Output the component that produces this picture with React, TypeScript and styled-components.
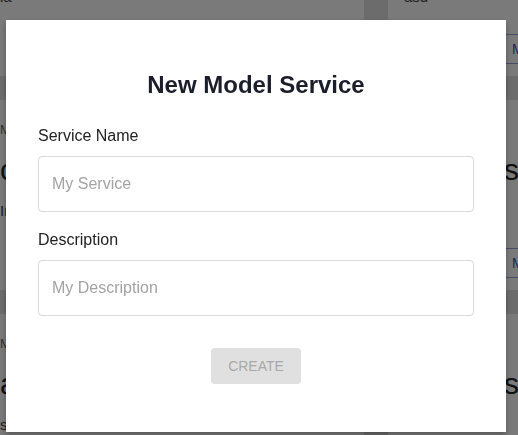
import React from "react";
import styled, { createGlobalStyle } from "styled-components";

const GlobalStyle = createGlobalStyle`
  html, body {
    margin: 0;
    padding: 0;
    overflow: hidden;
    background: #e2e2e2;
    font-family: "Liberation Sans", Arial, Helvetica, sans-serif;
  }
  * { box-sizing: border-box; }
`;

/* ---------- background page (dimmed) ---------- */

const Page = styled.div`
  width: 100vw;
  height: 100vh;
  overflow: hidden;
`;

const CardGrid = styled.div`
  display: grid;
  grid-template-columns: 380px 380px;
  column-gap: 24px;
  row-gap: 24px;
  align-items: start;
  /* page is scrolled: first row starts above the viewport */
  margin: -114px 0 0 -16px;
`;

const Card = styled.div`
  background: #ffffff;
  height: 190px;
  padding: 22px 16px 12px;
  display: flex;
  flex-direction: column;
`;

const CardLabel = styled.div`
  font-size: 13px;
  line-height: 16px;
  color: #6b6b6b;
`;

const CardTitle = styled.div`
  margin-top: 14px;
  font-size: 30px;
  line-height: 36px;
  color: #222222;
  white-space: nowrap;
`;

const CardDesc = styled.div`
  margin-top: 13px;
  font-size: 15px;
  line-height: 20px;
  color: #444444;
  white-space: nowrap;
`;

const CardActions = styled.div`
  margin-top: 27px;
  display: flex;
  justify-content: flex-end;
  gap: 8px;
`;

const OutlineButton = styled.button<{ $w?: number }>`
  height: 30px;
  width: ${(p) => p.$w ?? 120}px;
  padding: 0 8px;
  border: 1px solid rgba(63, 81, 181, 0.55);
  border-radius: 4px;
  background: transparent;
  color: #3f51b5;
  font-family: inherit;
  font-size: 14px;
  text-align: left;
`;

/* ---------- modal ---------- */

const Overlay = styled.div`
  position: fixed;
  inset: 0;
  background: rgba(0, 0, 0, 0.52);
  display: flex;
  align-items: flex-start;
  justify-content: flex-start;
  padding: 20px 0 0 6px;
`;

const Dialog = styled.div`
  width: 500px;
  background: #ffffff;
  padding: 51px 32px 48px;
  display: flex;
  flex-direction: column;
  box-shadow: 0 3px 6px rgba(0, 0, 0, 0.3);
`;

const DialogTitle = styled.h2`
  margin: 0;
  font-size: 24px;
  line-height: 28px;
  font-weight: 700;
  text-align: center;
  color: #1b1d2a;
`;

const Form = styled.form`
  margin-top: 28px;
  display: flex;
  flex-direction: column;
  gap: 19px;
`;

const Field = styled.div`
  display: flex;
  flex-direction: column;
`;

const Label = styled.label`
  font-size: 16px;
  line-height: 18px;
  color: #222222;
  margin-bottom: 11px;
`;

const Input = styled.input`
  height: 56px;
  width: 100%;
  border: 1px solid #dadada;
  border-radius: 4px;
  padding: 0 13px;
  font-family: inherit;
  font-size: 16px;
  color: #222;
  outline: none;
  &::placeholder {
    color: #a3a3a3;
  }
`;

const SubmitButton = styled.button`
  align-self: center;
  margin-top: 13px;
  width: 90px;
  height: 36px;
  border: none;
  border-radius: 4px;
  background: #e0e0e0;
  color: #a8a8a8;
  font-family: inherit;
  font-size: 14px;
  text-transform: uppercase;
`;

const cards = [
  { label: "Model", title: "classifier", desc: "ia" },
  { label: "Model", title: "compress", desc: "asd" },
  { label: "Model", title: "classifier", desc: "Image model" },
  { label: "Model", title: "compress", desc: "asd" },
  { label: "Model", title: "asdf", desc: "sdfsdf" },
  { label: "Model", title: "compress", desc: "asd" },
];

export default function App() {
  return (
    <>
      <GlobalStyle />
      <Page aria-hidden="true">
        <CardGrid>
          {cards.map((c, i) => (
            <Card key={i}>
              <CardLabel>{c.label}</CardLabel>
              <CardTitle>{c.title}</CardTitle>
              <CardDesc>{c.desc}</CardDesc>
              <CardActions>
                <OutlineButton>MANAGE</OutlineButton>
                <OutlineButton $w={121}>DELETE</OutlineButton>
              </CardActions>
            </Card>
          ))}
        </CardGrid>
      </Page>
      <Overlay>
        <Dialog role="dialog">
          <DialogTitle>New Model Service</DialogTitle>
          <Form onSubmit={(e) => e.preventDefault()}>
            <Field>
              <Label htmlFor="svc-name">Service Name</Label>
              <Input id="svc-name" placeholder="My Service" />
            </Field>
            <Field>
              <Label htmlFor="svc-desc">Description</Label>
              <Input id="svc-desc" placeholder="My Description" />
            </Field>
            <SubmitButton type="submit" disabled>
              Create
            </SubmitButton>
          </Form>
        </Dialog>
      </Overlay>
    </>
  );
}
